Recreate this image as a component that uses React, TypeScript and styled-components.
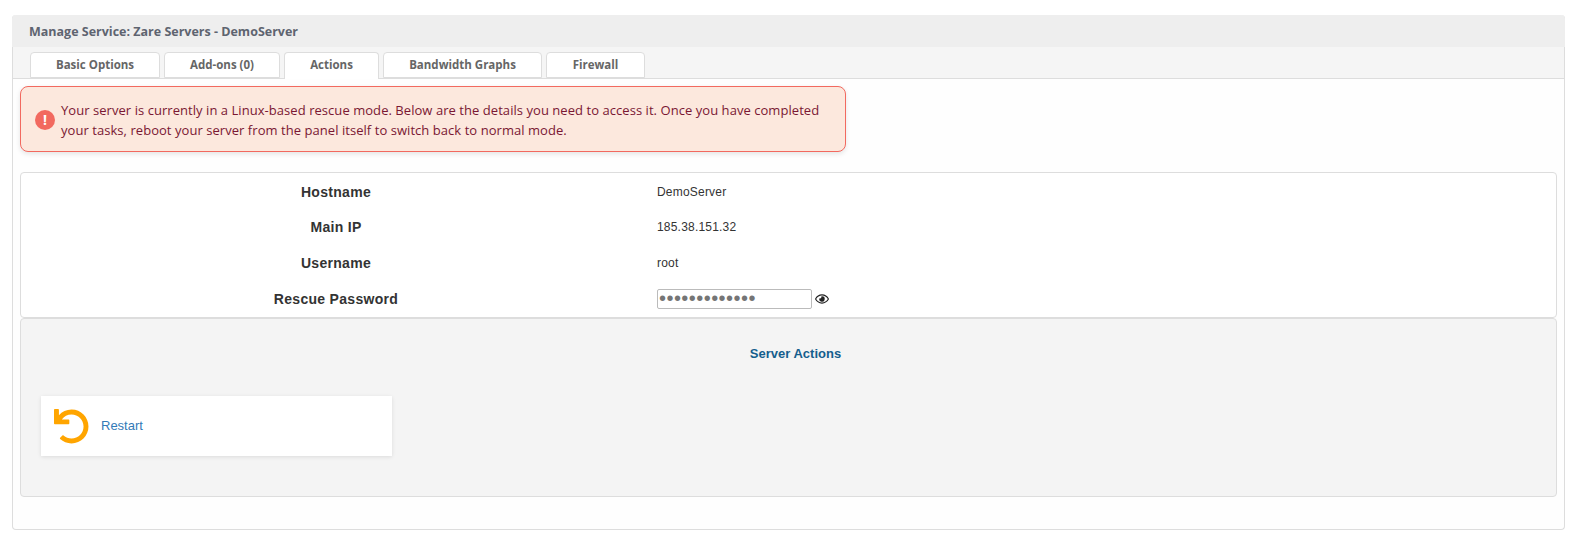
import React from 'react';
import styled, { createGlobalStyle } from 'styled-components';
import { FaRegEye, FaUndo } from 'react-icons/fa';

const GlobalStyle = createGlobalStyle`
  html, body {
    margin: 0;
    padding: 0;
    background: #fff;
  }
  body {
    font-family: "Liberation Sans", Arial, sans-serif;
    font-size: 12px;
    color: #333;
  }
`;

const Page = styled.div`
  padding: 15px 23px 19px 12px;
`;

const Panel = styled.div`
  border: 1px solid #ddd;
  border-top: 0;
  border-radius: 4px;
  height: 515px;
  box-sizing: border-box;
  background: #fefefe;
`;

const PanelHeading = styled.div`
  height: 32px;
  margin: 0 -1px;
  padding: 0 17px;
  display: flex;
  align-items: center;
  background: #eee;
  border-radius: 4px 4px 0 0;
  font-family: "Open Sans", sans-serif;
  font-weight: 700;
  font-size: 12.5px;
  color: #5e6470;
`;

const TabBar = styled.div`
  height: 32px;
  box-sizing: border-box;
  padding: 5px 0 0 17px;
  display: flex;
  gap: 4px;
  background: #f5f5f5;
  border-bottom: 1px solid #ddd;
`;

const Tab = styled.div<{ $active?: boolean; $width: number }>`
  width: ${(p) => p.$width}px;
  height: ${(p) => (p.$active ? 27 : 26)}px;
  box-sizing: border-box;
  padding-bottom: ${(p) => (p.$active ? 3 : 1)}px;
  display: flex;
  align-items: center;
  justify-content: center;
  background: #fff;
  border: 1px solid #ddd;
  border-bottom: ${(p) => (p.$active ? 0 : '1px solid #ddd')};
  border-radius: 4px 4px 0 0;
  font-family: "Open Sans", sans-serif;
  font-weight: 700;
  font-size: 11.5px;
  color: #666;
`;

const Body = styled.div`
  padding: 7px 7px 0;
`;

const Alert = styled.div`
  width: 826px;
  height: 66px;
  box-sizing: border-box;
  padding: 2px 20px 0 14px;
  display: flex;
  align-items: center;
  gap: 6px;
  background: #fce8dd;
  border: 1px solid #f2695f;
  border-radius: 8px;
  box-shadow: 0 2px 5px rgba(0, 0, 0, 0.1);
  font-family: "Open Sans", sans-serif;
  font-size: 13px;
  letter-spacing: 0.05px;
  line-height: 20px;
  color: #7a1733;
`;

const AlertIcon = styled.span`
  flex: none;
  width: 20px;
  height: 20px;
  border-radius: 50%;
  display: flex;
  align-items: center;
  justify-content: center;
  background: #f2695f;
  color: #fff;
  font-weight: 700;
  font-size: 14px;
`;

const InfoTable = styled.div`
  margin-top: 20px;
  height: 146px;
  box-sizing: border-box;
  padding: 1px 0;
  background: #fff;
  border: 1px solid #ddd;
  border-radius: 4px;
  display: grid;
  grid-template-columns: 630px 1fr;
  grid-auto-rows: 35.6px;
  align-items: center;
`;

const Label = styled.div`
  text-align: center;
  font-weight: 700;
  font-size: 14px;
  letter-spacing: 0.3px;
  color: #333;
`;

const Value = styled.div`
  display: flex;
  align-items: center;
  gap: 3px;
  padding-left: 6px;
  font-size: 12px;
  letter-spacing: 0.2px;
  color: #333;
`;

const PasswordBox = styled.input`
  width: 155px;
  height: 20px;
  box-sizing: border-box;
  padding: 0 1px;
  border: 1px solid #bbb;
  border-radius: 2px;
  font-size: 20px;
  letter-spacing: 0.45px;
  color: #757575;
`;

const ActionsBox = styled.div`
  height: 179px;
  box-sizing: border-box;
  background: #f4f4f4;
  border: 1px solid #ddd;
  border-radius: 4px;
  padding: 28px 20px 0;
`;

const ActionsTitle = styled.div`
  padding-left: 14px;
  text-align: center;
  font-weight: 700;
  font-size: 13px;
  line-height: 14px;
  color: #155e8d;
`;

const ActionCard = styled.div`
  margin-top: 35px;
  width: 351px;
  height: 60px;
  box-sizing: border-box;
  padding: 0 13px;
  display: flex;
  align-items: center;
  gap: 12px;
  background: #fff;
  box-shadow: 0 1px 4px rgba(0, 0, 0, 0.1);
`;

const ActionLink = styled.a`
  padding-bottom: 2px;
  font-size: 13px;
  color: #337ab7;
`;

const rows = [
  { label: 'Hostname', value: 'DemoServer' },
  { label: 'Main IP', value: '185.38.151.32' },
  { label: 'Username', value: 'root' },
];

const tabs = [
  { name: 'Basic Options', width: 130 },
  { name: 'Add-ons (0)', width: 116 },
  { name: 'Actions', width: 95 },
  { name: 'Bandwidth Graphs', width: 159 },
  { name: 'Firewall', width: 99 },
].map((t) => ({ ...t, active: t.name === 'Actions' }));

export default function App() {
  return (
    <>
      <GlobalStyle />
      <Page>
        <Panel>
          <PanelHeading>Manage Service: Zare Servers - DemoServer</PanelHeading>
          <TabBar>
            {tabs.map((t) => (
              <Tab key={t.name} $active={t.active} $width={t.width}>
                {t.name}
              </Tab>
            ))}
          </TabBar>
          <Body>
            <Alert>
              <AlertIcon>!</AlertIcon>
              <span>
                Your server is currently in a Linux-based rescue mode. Below are the details you need to access it. Once
                you have completed your tasks, reboot your server from the panel itself to switch back to normal mode.
              </span>
            </Alert>
            <InfoTable>
              {rows.map((r) => (
                <React.Fragment key={r.label}>
                  <Label>{r.label}</Label>
                  <Value>{r.value}</Value>
                </React.Fragment>
              ))}
              <Label>Rescue Password</Label>
              <Value>
                <PasswordBox type="password" defaultValue="abcdefghijklm" readOnly />
                <FaRegEye size={14} color="#222" />
              </Value>
            </InfoTable>
            <ActionsBox>
              <ActionsTitle>Server Actions</ActionsTitle>
              <ActionCard>
                <FaUndo size={35} color="#ffa500" />
                <ActionLink>Restart</ActionLink>
              </ActionCard>
            </ActionsBox>
          </Body>
        </Panel>
      </Page>
    </>
  );
}
